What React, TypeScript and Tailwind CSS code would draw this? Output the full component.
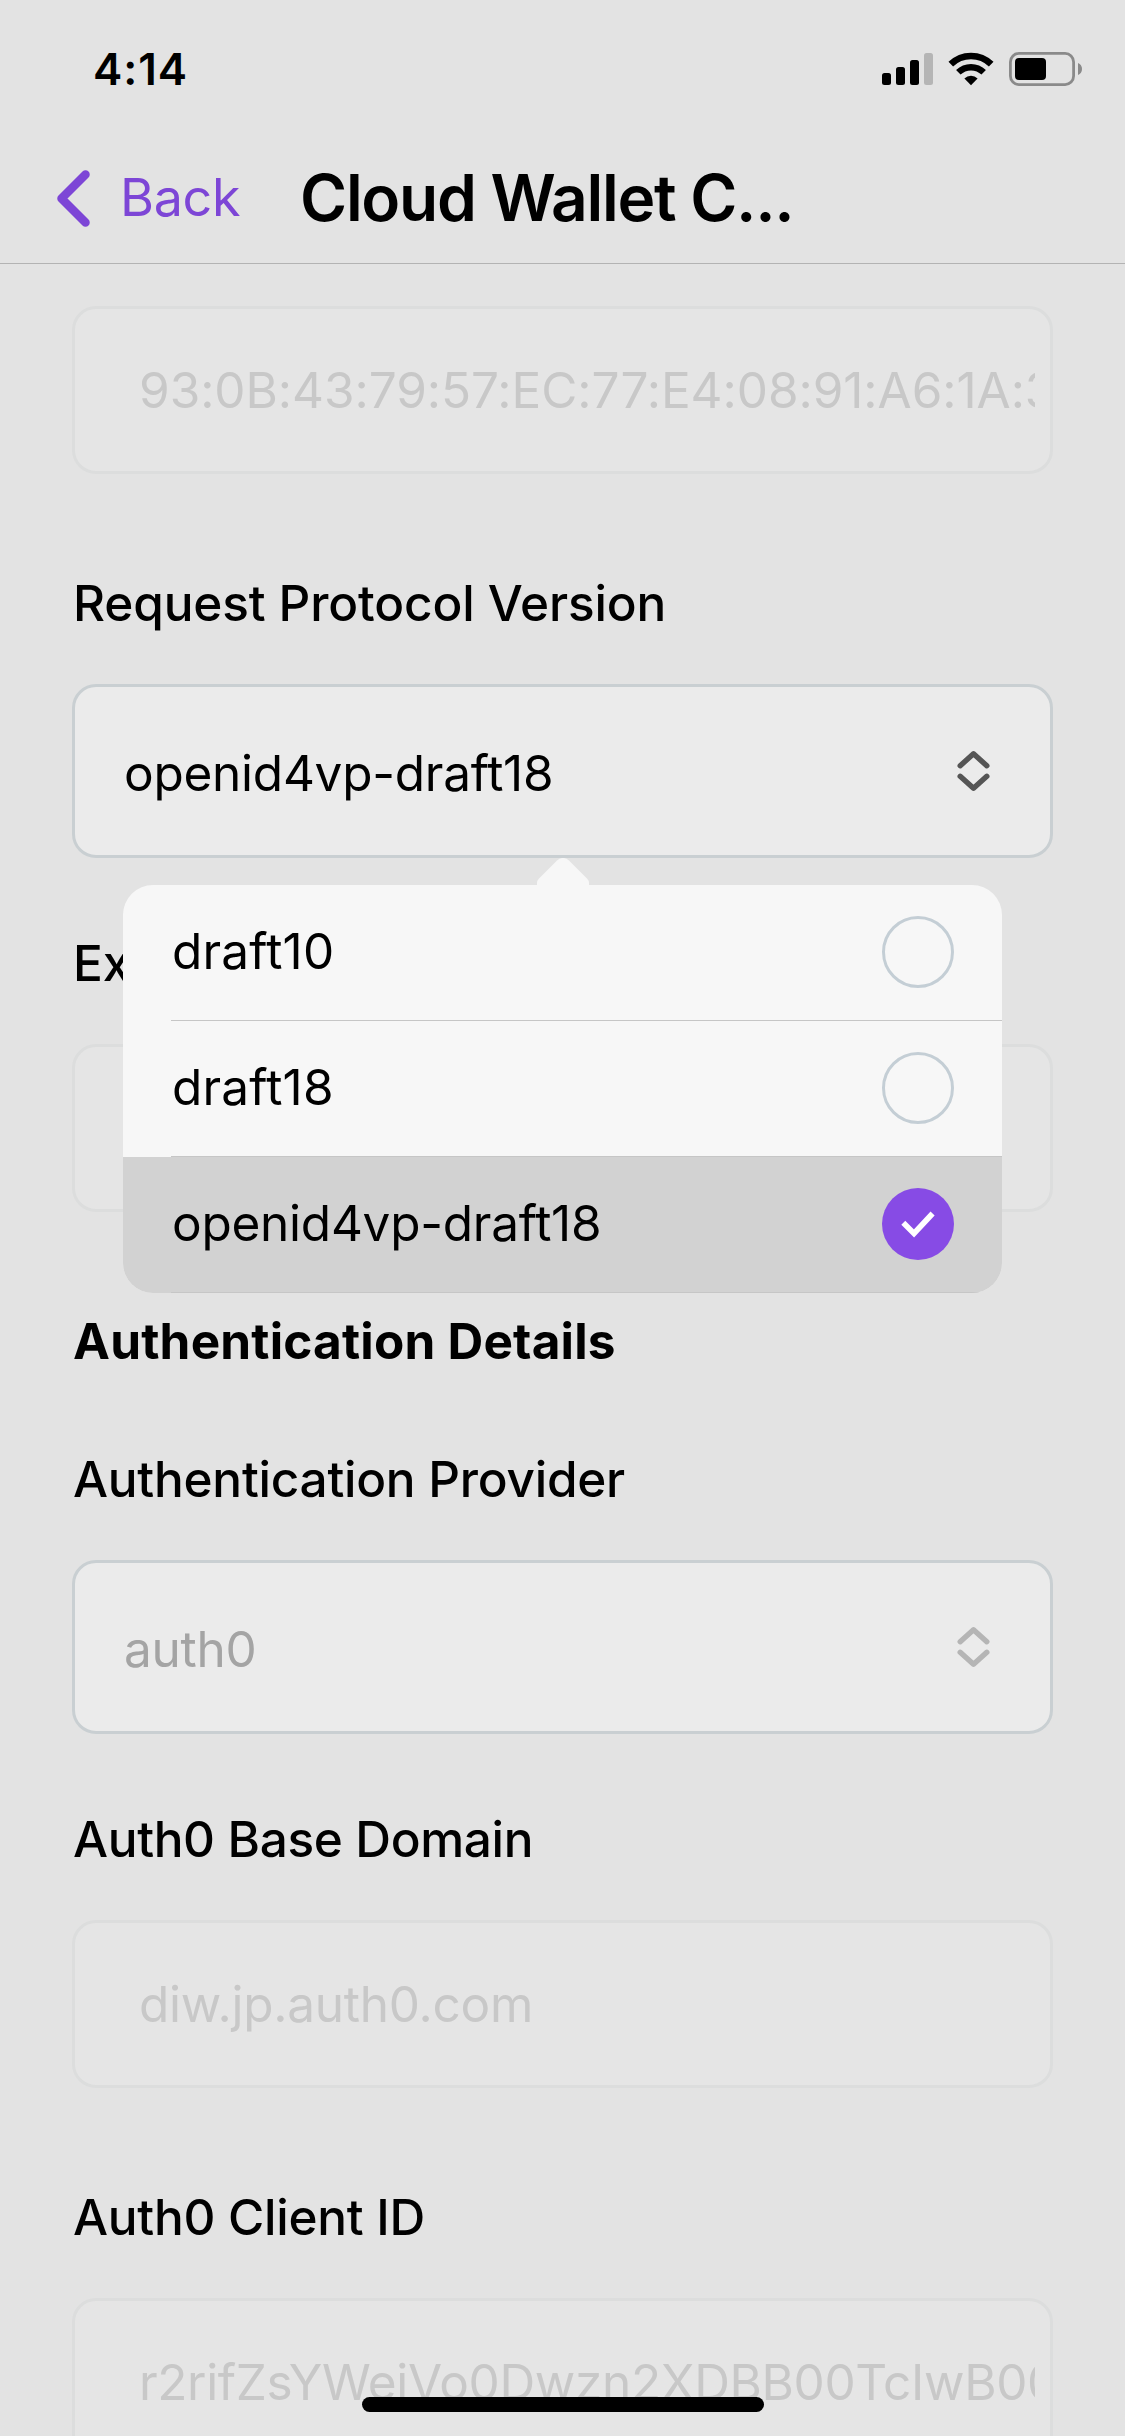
import type { ReactNode } from "react";

function StatusBar() {
  return (
    <div className="flex h-[134px] items-start justify-between pl-[93px] pr-[43px]">
      <span className="mt-[39px] text-[44px] font-semibold leading-[60px] tracking-[0.95px]">4:14</span>
      <div className="mt-[52px] flex h-[34px] items-start">
        <svg width="51" height="34" viewBox="0 0 51 34" aria-hidden="true">
          <rect x="0" y="21" width="9" height="12" rx="2.5" />
          <rect x="14" y="15" width="9" height="18" rx="2.5" />
          <rect x="28" y="8" width="9" height="25" rx="2.5" />
          <rect x="42" y="1" width="9" height="32" rx="2.5" fill="#b5b5b5" />
        </svg>
        <svg className="ml-[15px]" width="46" height="34" viewBox="0 0 46 34" fill="none" aria-hidden="true">
          <path d="M2.8 12.2 A29 29 0 0 1 43.2 12.2" stroke="#000" strokeWidth="6.6" />
          <path d="M10.3 20.3 A18.3 18.3 0 0 1 35.7 20.3" stroke="#000" strokeWidth="6.4" />
          <path d="M23 33.2 L16.4 26.5 A9.6 9.6 0 0 1 29.6 26.5 Z" fill="#000" />
        </svg>
        <svg className="ml-[15px]" width="73" height="34" viewBox="0 0 73 34" fill="none" aria-hidden="true">
          <rect x="1.4" y="1.4" width="63.2" height="31.2" rx="8.5" stroke="#8a8a8a" strokeWidth="2.8" />
          <rect x="6" y="6" width="31" height="22" rx="4" fill="#000" />
          <path d="M69 11 C71.5 12 73 14.3 73 17 C73 19.7 71.5 22 69 23 Z" fill="#8a8a8a" />
        </svg>
      </div>
    </div>
  );
}

function NavBar() {
  return (
    <header className="flex h-[130px] items-start border-b border-[#b3b3b3] pl-14">
      <div className="flex items-start text-[#7d46d6]">
        <svg className="mt-[36px]" width="34" height="57" viewBox="0 0 34 57" fill="none" aria-hidden="true">
          <path d="M29.5 4.5 L5.5 28.5 L29.5 52.5" stroke="currentColor" strokeWidth="8.5" strokeLinecap="round" strokeLinejoin="round" />
        </svg>
        <span className="ml-[30px] mt-[34px] w-[120px] whitespace-nowrap text-[52px] leading-[60px] tracking-[-0.34px]">
          Back
        </span>
      </div>
      <h1 className="ml-[60px] mt-6 whitespace-nowrap text-[64px] font-semibold leading-[80px] tracking-[-1.27px]">
        Cloud Wallet C...
      </h1>
    </header>
  );
}

function Label({ children, className }: { children: ReactNode; className: string }) {
  return (
    <div className={`h-[60px] whitespace-nowrap pl-px text-[49.5px] font-medium leading-[60px] ${className}`}>
      {children}
    </div>
  );
}

function TextInput({ value, className = "" }: { value?: string; className?: string }) {
  return (
    <div className="flex h-[168px] items-center rounded-[24px] border-[3px] border-[#dcdddd] bg-[#e5e5e5] pl-16 pr-[15px]">
      <div className={`h-[60px] flex-1 overflow-hidden whitespace-nowrap text-[49.5px] leading-[60px] text-[#c8c8c8] ${className}`}>
        {value}
      </div>
    </div>
  );
}

function Select({ value, disabled = false }: { value: string; disabled?: boolean }) {
  return (
    <div className="flex h-[174px] items-center justify-between rounded-[24px] border-[3px] border-[#c9cfd2] bg-[#ebebeb] pl-[49px] pr-[58px]">
      <span
        className={`mt-1 text-[49.5px] leading-[60px] tracking-[-0.25px] ${disabled ? "text-[#a4a4a4]" : "text-black"}`}
      >
        {value}
      </span>
      <svg
        className={disabled ? "text-[#b5b5b5]" : "text-[#555555]"}
        width="36"
        height="42"
        viewBox="0 0 36 42"
        fill="none"
        stroke="currentColor"
        strokeWidth="5.4"
        strokeLinecap="round"
        strokeLinejoin="round"
        aria-hidden="true"
      >
        <path d="M4.2 15.7 L17.5 3.8 L30.8 15.7" />
        <path d="M4.2 26.3 L17.5 38.2 L30.8 26.3" />
      </svg>
    </div>
  );
}

const options = [
  { label: "draft10", selected: false },
  { label: "draft18", selected: false },
  { label: "openid4vp-draft18", selected: true },
];

function OptionMenu() {
  return (
    <div className="absolute left-[51px] top-full z-10 w-[879px]">
      <svg className="mx-auto block" width="52" height="27" viewBox="0 0 52 27" aria-hidden="true">
        <path d="M0 27 V25 Q0 22.5 2 20.5 L20 2.5 Q22.5 0 25 0 H27 Q29.5 0 32 2.5 L50 20.5 Q52 22.5 52 25 V27 Z" fill="#f7f7f7" />
      </svg>
      <div className="overflow-hidden rounded-[30px] bg-[#f7f7f7]">
        {options.map((o) => (
          <div key={o.label} className={`pl-12 ${o.selected ? "bg-[#d2d2d2]" : ""}`}>
            <div className="flex h-[136px] items-start justify-between border-b border-[#c6c6c6] pr-12">
              <span
                className={`mt-9 pl-px text-[49.5px] leading-[60px] ${o.selected ? "tracking-[-0.25px]" : "tracking-[0.2px]"}`}
              >
                {o.label}
              </span>
              {o.selected ? (
                <div className="mt-[31px] flex size-[72px] items-center justify-center rounded-full bg-[#874be5]">
                  <svg width="36" height="28" viewBox="0 0 36 28" fill="none" aria-hidden="true">
                    <path d="M3.3 12.8 L14 23.5 L32.6 3.5" stroke="#fff" strokeWidth="5.6" />
                  </svg>
                </div>
              ) : (
                <div className="mt-[31px] size-[72px] rounded-full border-[3px] border-[#c4ced5]" />
              )}
            </div>
          </div>
        ))}
      </div>
    </div>
  );
}

export default function App() {
  return (
    <div className="relative h-[2436px] w-[1125px] overflow-hidden bg-[#e3e3e3] font-['Inter',sans-serif] text-black">
      <StatusBar />
      <NavBar />
      <main className="flex flex-col px-[72px] pt-[42px]">
        <TextInput value="93:0B:43:79:57:EC:77:E4:08:91:A6:1A:37" className="tracking-[-0.06px]" />

        <Label className="mt-[99px] tracking-[-0.13px]">Request Protocol Version</Label>
        <div className="relative mt-[51px]">
          <Select value="openid4vp-draft18" />
          <OptionMenu />
        </div>

        <Label className="mt-[75px]">Ex</Label>
        <div className="mt-[51px]">
          <TextInput />
        </div>

        <h2 className="mt-[99px] h-[60px] whitespace-nowrap pl-px text-[49.5px] font-bold leading-[60px] tracking-[0.2px]">
          Authentication Details
        </h2>

        <Label className="mt-[78px] tracking-[-0.25px]">Authentication Provider</Label>
        <div className="mt-[51px]">
          <Select value="auth0" disabled />
        </div>

        <Label className="mt-[75px] tracking-[-0.36px]">Auth0 Base Domain</Label>
        <div className="mt-[51px]">
          <TextInput value="diw.jp.auth0.com" className="tracking-[-0.25px]" />
        </div>

        <Label className="mt-[99px] tracking-[-0.28px]">Auth0 Client ID</Label>
        <div className="mt-[51px]">
          <TextInput value="r2rifZsYWeiVo0Dwzn2XDBB00TcIwB00" className="tracking-[-0.35px]" />
        </div>
      </main>
      <div className="absolute bottom-6 left-[362px] h-[15px] w-[402px] rounded-full bg-black" />
    </div>
  );
}
